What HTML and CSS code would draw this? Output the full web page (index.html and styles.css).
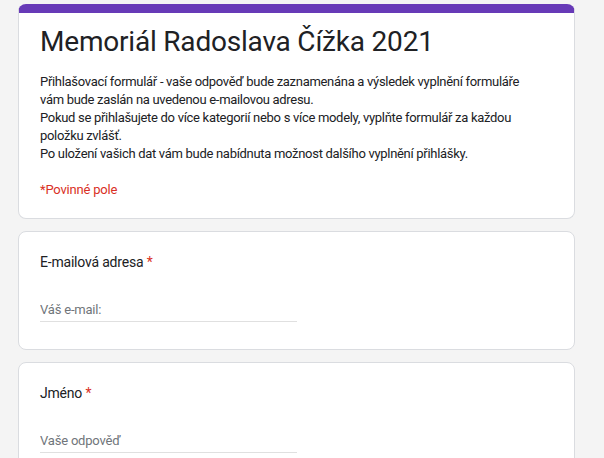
FILE: index.html
```html
<!DOCTYPE html>
<html lang="cs">
<head>
    <meta charset="UTF-8">
    <meta name="viewport" content="width=device-width, initial-scale=1.0">
    <title>Memoriál Radoslava Čížka 2021</title>
    <link rel="stylesheet" href="styles.css">
</head>
<body>
    <div class="form">
        <div class="card header-card">
            <h1>Memoriál Radoslava Čížka 2021</h1>
            <div class="description">
                Přihlašovací formulář - vaše odpověď bude zaznamenána a výsledek vyplnění formuláře<br>
                vám bude zaslán na uvedenou e-mailovou adresu.<br>
                Pokud se přihlašujete do více kategorií nebo s více modely, vyplňte formulář za každou<br>
                položku zvlášť.<br>
                Po uložení vašich dat vám bude nabídnuta možnost dalšího vyplnění přihlášky.
            </div>
            <div class="required-note">*Povinné pole</div>
        </div>

        <div class="card question">
            <div class="label">E-mailová adresa <span class="star">*</span></div>
            <input type="email" class="answer" placeholder="Váš e-mail:">
        </div>

        <div class="card question">
            <div class="label">Jméno <span class="star">*</span></div>
            <input type="text" class="answer" placeholder="Vaše odpověď">
        </div>
    </div>
</body>
</html>
```

FILE: styles.css
```css
body {
    font-family: Roboto, Arial, sans-serif;
    margin: 0;
    padding: 0;
    background-color: #f4f4f4;
    color: #202124;
}
.form {
    width: 557px;
    margin-left: 18px;
    padding-top: 4px;
    display: flex;
    flex-direction: column;
    gap: 12px;
}
.card {
    background: #fff;
    border: 1px solid #dadce0;
    border-radius: 8px;
    padding: 0 21px;
    box-sizing: border-box;
}
.header-card {
    border-top: 9px solid #673ab7;
    padding-top: 11px;
    padding-bottom: 19px;
}
h1 {
    font-size: 28px;
    font-weight: 400;
    line-height: 36px;
    letter-spacing: -0.2px;
    margin: 0 0 13px 0;
}
.description {
    font-size: 13px;
    line-height: 18px;
    letter-spacing: -0.3px;
}
.required-note {
    color: #d93025;
    font-size: 13px;
    line-height: 18px;
    letter-spacing: -0.2px;
    margin-top: 18px;
}
.question {
    padding-top: 20px;
    padding-bottom: 27px;
}
.label {
    font-size: 14px;
    line-height: 20px;
    letter-spacing: -0.2px;
}
.star {
    color: #d93025;
}
.answer {
    display: block;
    width: 257px;
    margin-top: 26px;
    padding: 4px 0 3px 0;
    border: none;
    border-bottom: 1px solid #e0e0e0;
    font-family: Roboto, Arial, sans-serif;
    font-size: 13px;
    line-height: 16px;
    letter-spacing: -0.2px;
    color: #202124;
    outline: none;
}
.answer::placeholder {
    color: #70757a;
}
```
